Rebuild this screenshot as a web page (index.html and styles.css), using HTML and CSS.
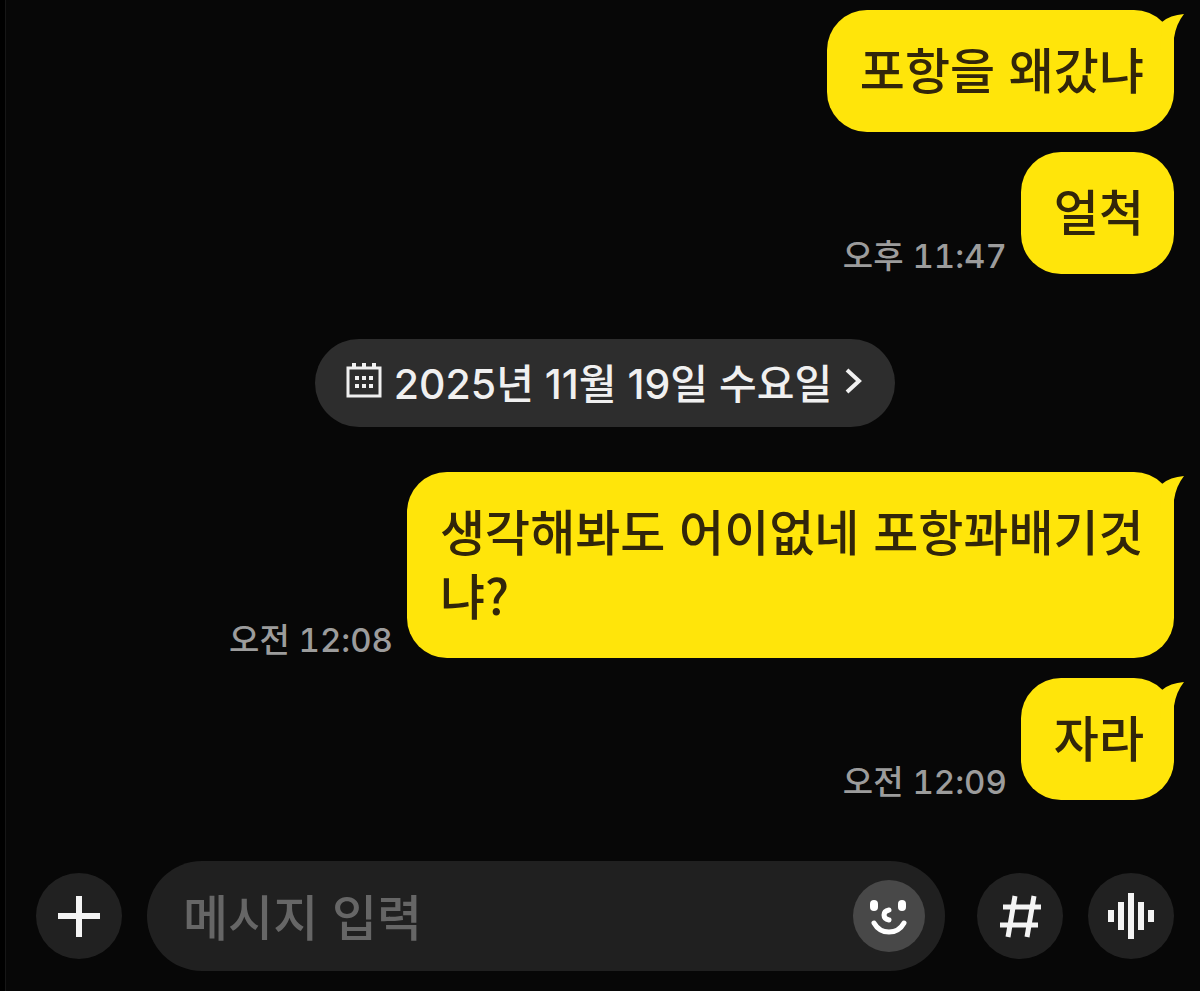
FILE: index.html
```
<!DOCTYPE html>
<html lang="ko">
<head>
  <meta charset="UTF-8">
  <meta name="viewport" content="width=device-width, initial-scale=1.0">
  <title>채팅</title>
  <link rel="stylesheet" href="styles.css">
</head>
<body>
  <main class="chat">
    <div class="messages">
      <div class="message">
        <p class="bubble">포항을 왜갔냐
          <svg class="tail" viewBox="0 0 36 40" aria-hidden="true"><path d="M12 12Q20 5 34 4Q26 14 24 28V40H10Z"/></svg>
        </p>
      </div>
      <div class="message">
        <time class="time">오후 11:47</time>
        <p class="bubble">얼척</p>
      </div>

      <button class="date" type="button">
        <svg class="date-icon" viewBox="0 0 36 36" aria-hidden="true">
          <path d="M2 5H34V33H2Z" fill="none" stroke="currentColor" stroke-width="3"/>
          <path d="M8 0V5M18 0V5M28 0V5" stroke="currentColor" stroke-width="4"/>
          <path d="M9 15H13M16 15H20M23 15H27M9 23H13M16 23H20M23 23H27" stroke="currentColor" stroke-width="4"/>
        </svg>
        <span>2025년 11월 19일 수요일</span>
        <svg class="date-arrow" viewBox="0 0 18 28" aria-hidden="true">
          <path d="M3 3L15 14L3 25" fill="none" stroke="currentColor" stroke-width="4"/>
        </svg>
      </button>

      <div class="message">
        <time class="time">오전 12:08</time>
        <p class="bubble">생각해봐도 어이없네 포항꽈배기것냐?
          <svg class="tail" viewBox="0 0 36 40" aria-hidden="true"><path d="M12 12Q20 5 34 4Q26 14 24 28V40H10Z"/></svg>
        </p>
      </div>
      <div class="message">
        <time class="time">오전 12:09</time>
        <p class="bubble">자라
          <svg class="tail" viewBox="0 0 36 40" aria-hidden="true"><path d="M12 12Q20 5 34 4Q26 14 24 28V40H10Z"/></svg>
        </p>
      </div>
    </div>

    <form class="composer">
      <button class="round" type="button" aria-label="추가">
        <svg viewBox="0 0 86 86" aria-hidden="true"><path d="M43 23V64M22 43H64" stroke="currentColor" stroke-width="6"/></svg>
      </button>
      <div class="field">
        <input class="input" type="text" placeholder="메시지 입력" aria-label="메시지 입력">
        <button class="emoji" type="button" aria-label="이모티콘">
          <svg viewBox="0 0 72 72" fill="none" stroke="currentColor" aria-hidden="true">
            <rect x="17" y="20" width="8" height="11" rx="4" fill="currentColor" stroke="none"/>
            <rect x="45" y="20" width="8" height="11" rx="4" fill="currentColor" stroke="none"/>
            <path d="M36 30Q31 31 31 35Q31 39 36 40" stroke-width="5" stroke-linecap="round"/>
            <path d="M21 43Q26 52 36 52Q46 52 51 43" stroke-width="5" stroke-linecap="round"/>
          </svg>
        </button>
      </div>
      <button class="round" type="button" aria-label="샵검색">
        <svg viewBox="0 0 86 86" aria-hidden="true"><path d="M38 23L31 64M57 23L50 64M26 34H64M23 52H61" stroke="currentColor" stroke-width="5"/></svg>
      </button>
      <button class="round" type="button" aria-label="음성 메시지">
        <svg viewBox="0 0 86 86" aria-hidden="true"><path d="M23 37V49M33 29V57M43 20V66M53 29V57M63 37V49" stroke="currentColor" stroke-width="6"/></svg>
      </button>
    </form>
  </main>
</body>
</html>
```

FILE: styles.css
```
* {
  box-sizing: border-box;
}
body {
  margin: 0;
  background-color: #000;
  font-family: "Noto Sans CJK KR", sans-serif;
}
button {
  border: none;
  cursor: pointer;
}
svg {
  display: block;
}
.chat {
  display: flex;
  flex-direction: column;
  min-height: 100vh;
  margin-left: 5px;
  padding: 10px 26px 20px 30px;
  border-left: 1px solid #161616;
  background-color: #070707;
}

/* Messages */
.messages {
  display: flex;
  flex-direction: column;
  flex: 1;
  gap: 20px;
}
.message {
  display: flex;
  justify-content: flex-end;
  align-items: flex-end;
  gap: 14px;
}
.bubble {
  position: relative;
  max-width: 767px;
  margin: 0;
  padding: 26px 30px 32px 33px;
  border-radius: 40px;
  background-color: #ffe50a;
  color: #32260a;
  font-size: 49px;
  font-weight: 500;
  line-height: 64px;
  word-break: break-all;
}
.tail {
  position: absolute;
  top: 0;
  right: -12px;
  width: 36px;
  height: 40px;
  fill: #ffe50a;
}
.time {
  flex-shrink: 0;
  color: #9c9c9c;
  font-family: "Inter", "Noto Sans CJK KR", sans-serif;
  font-size: 33px;
  font-weight: 500;
  font-variant-numeric: tabular-nums;
  line-height: 36px;
}

/* Date divider */
.date {
  display: flex;
  align-items: center;
  align-self: center;
  gap: 12px;
  height: 88px;
  margin: 45px 0 25px;
  padding: 0 33px 4px 31px;
  border-radius: 44px;
  background-color: #2d2d2d;
  color: #f0f0f0;
  font-family: "Inter", "Noto Sans CJK KR", sans-serif;
  font-size: 41px;
  font-weight: 500;
}
.date-icon {
  width: 36px;
  height: 36px;
}
.date-arrow {
  width: 18px;
  height: 28px;
}

/* Message input */
.composer {
  display: flex;
  align-items: center;
  gap: 25px;
}
.round {
  flex-shrink: 0;
  width: 86px;
  height: 86px;
  padding: 0;
  border-radius: 50%;
  background-color: #212121;
  color: #f4f4f4;
}
.field {
  display: flex;
  align-items: center;
  flex: 1;
  min-width: 0;
  height: 110px;
  margin-right: 7px;
  padding: 0 20px 0 36px;
  border-radius: 55px;
  background-color: #202020;
}
.input {
  flex: 1;
  min-width: 0;
  padding: 0 0 4px;
  border: none;
  outline: none;
  background: none;
  color: #f4f4f4;
  font-family: inherit;
  font-size: 49px;
  font-weight: 500;
}
.input::placeholder {
  color: #666;
}
.emoji {
  flex-shrink: 0;
  width: 72px;
  height: 72px;
  padding: 0;
  border-radius: 50%;
  background-color: #484848;
  color: #fff;
}
```
